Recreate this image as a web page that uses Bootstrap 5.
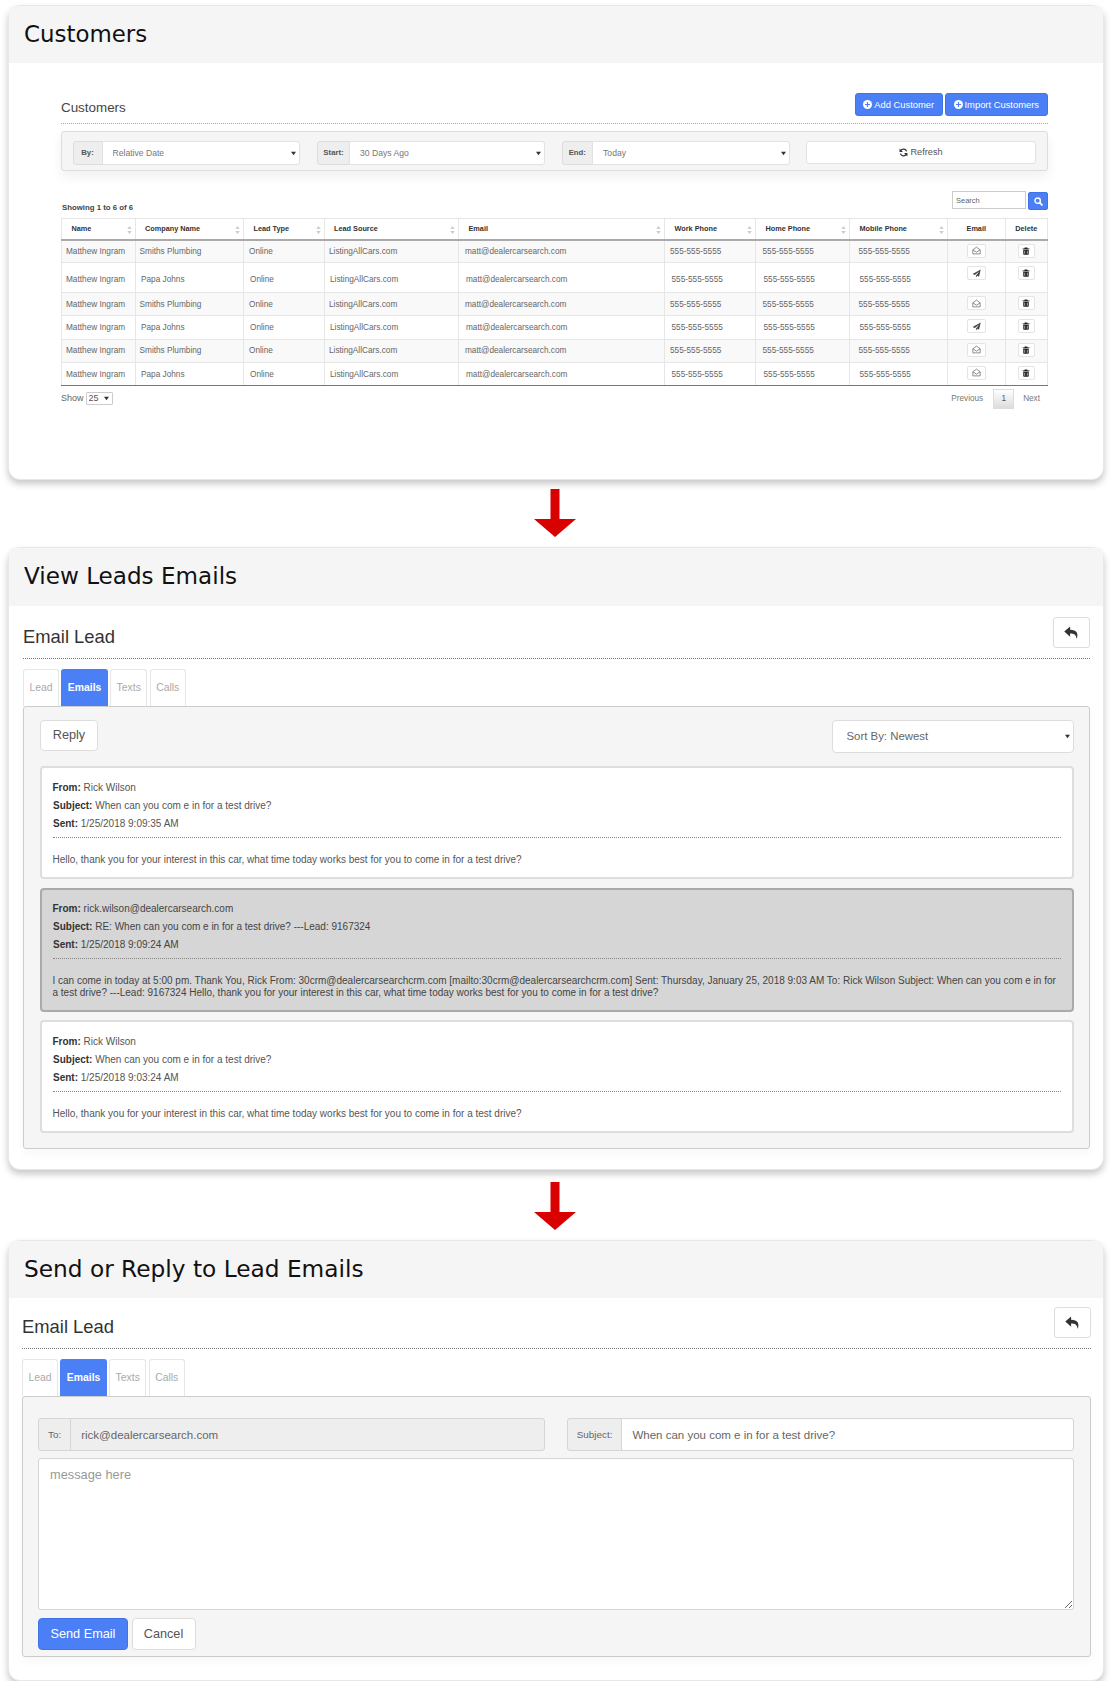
<!DOCTYPE html>
<html lang="en">
<head>
<meta charset="utf-8">
<title>Customers</title>
<link href="https://cdn.jsdelivr.net/npm/bootstrap@5.3.0/dist/css/bootstrap.min.css" rel="stylesheet">
<style>
body{background:#fff;margin:0;font-family:"Liberation Sans",Arial,sans-serif;color:#555;padding-top:5px}
.pnl{margin:0 6px 0 8px;border:1px solid #e8e8e8;border-radius:12px;background:#fff;box-shadow:0 4px 7px rgba(0,0,0,.22);overflow:visible}
.pnl-head{height:58px;background:#f5f5f5;border:0;border-radius:11px 11px 0 0;padding:0 15px 1px;display:flex;align-items:center}
.pnl-head.first{height:57px}
.pnl-head.last{height:57px}
.pnl-head h1{margin:0;font:400 23.1px "DejaVu Sans",Verdana,sans-serif;color:#111}
.pnl-head.first h1{font-size:22.9px}
.pnl-head.last h1{font-size:23.25px}
.arrow-gap{display:flex;justify-content:center;align-items:center;height:67px}
.arrow-gap.second{height:69.5px;padding-top:2px}
.arrow-gap svg{display:block}
.cust-body{padding:30px 55px 70px 52px}
.title-row{display:flex;justify-content:space-between;align-items:flex-end;border-bottom:1px dotted #aaa;padding-bottom:7px}
.title-row h2{margin:0;font-size:13.4px;line-height:16px;font-weight:400;color:#444}
.btn-blue{background:#4b7ff5;border:1px solid #4173e8;color:#fff;border-radius:3px}
.btn-blue:hover{background:#4b7ff5;color:#fff}
.top-btn{font-size:9.4px;height:23px;width:88.5px;padding:0;display:inline-flex;align-items:center;justify-content:center;gap:2px;line-height:1}
.top-btn.wide{width:103.5px}
.top-btns{display:flex;gap:1.5px}
.filter-well{margin-top:7px;height:40px;background:#f5f5f5;border:1px solid #ddd;border-radius:3px;padding:9px 11px 9px 10.5px;display:flex;gap:16.6px;box-shadow:0 6px 12px rgba(0,0,0,.06)}
.filter-well>*{flex:1 1 0;min-width:0}
.flt{height:24px;flex-wrap:nowrap}
.flt .input-group-text{font-size:7.8px;font-weight:700;color:#555;background:#eee;border:1px solid #ddd;padding:0;width:30px;border-radius:3px 0 0 3px;justify-content:center}
.flt .input-group-text.w-start{width:33px}
.flt .input-group-text.w-end{width:31.5px}
.flt .form-select{font-size:8.6px;color:#777;height:24px;min-height:0;padding:0 14px 0 10px;border:1px solid #e2e2e2;border-radius:0 3px 3px 0}
.form-select{background-image:url("data:image/svg+xml,%3Csvg xmlns='http://www.w3.org/2000/svg' viewBox='0 0 6 6'%3E%3Cpath d='M0 1h6L3 5z' fill='%23333'/%3E%3C/svg%3E");background-size:5px 5px;background-position:right 3px center}
.refresh-btn{height:23px;font-size:9.2px;color:#555;background:#fff;border:1px solid #e2e2e2;border-radius:3px;padding:0;display:flex;align-items:center;justify-content:center;gap:2px}
.tools-row{margin-top:20px;display:flex;justify-content:space-between;align-items:flex-end}
.showing{font-size:7.8px;font-weight:700;color:#444;line-height:10px;padding:0 0 0 1px;margin-bottom:-3px}
.search-box{display:flex;gap:2px;align-items:flex-start}
.search-box .form-control{width:74px;height:18px;min-height:0;font-size:7.5px;padding:0 3px;border:1px solid #ccc;border-radius:0}
.search-btn{width:20px;height:18px;margin-top:1px;padding:0;display:flex;align-items:center;justify-content:center;border-radius:2px}
.crm-table{table-layout:fixed;width:100%;margin:8px 0 0;border-collapse:collapse;font-size:8.25px;color:#666}
.crm-table th,.crm-table td{border:1px solid #e6e6e6;padding:0;vertical-align:middle;line-height:10px;box-shadow:none;background:transparent;color:inherit}
.crm-table thead th{height:21px;font-size:7.3px;font-weight:700;color:#333;padding:0 3px 0 9.5px;border-bottom:2px solid #aaa}
.crm-table thead th.mid{text-align:center;padding:0}
.crm-table tbody tr:nth-child(odd) td{background:#f9f9f9}
.crm-table tbody td{height:23.2px;padding:1.5px 0 0 4px}
.crm-table tbody tr.tall td{height:30px;padding-top:4px}
.crm-table tbody tr:last-child td{border-bottom:1px solid #777}
.crm-table tbody td:nth-child(3){padding-left:5px}
.crm-table tbody td:nth-child(4){padding-left:4.5px}
.crm-table tbody td:nth-child(5){padding-left:6px}
.crm-table tbody td:nth-child(6){padding-left:5px}
.crm-table tbody td:nth-child(7){padding-left:6.5px}
.crm-table tbody td:nth-child(8){padding-left:8.500px}
.crm-table tbody tr:nth-child(even) td:nth-child(2){padding-left:5.5px}
.crm-table tbody tr:nth-child(even) td:nth-child(3){padding-left:6px}
.crm-table tbody tr:nth-child(even) td:nth-child(4){padding-left:5.5px}
.crm-table tbody tr:nth-child(even) td:nth-child(5){padding-left:7px}
.crm-table tbody tr:nth-child(even) td:nth-child(6){padding-left:6.5px}
.crm-table tbody tr:nth-child(even) td:nth-child(7){padding-left:7.5px}
.crm-table tbody tr:nth-child(even) td:nth-child(8){padding-left:9.5px}
.crm-table tbody td.act,.crm-table tbody tr:nth-child(even) td.act{padding:3px 0 0;text-align:center;vertical-align:top}
.srt{float:right;margin-top:2px}
.ico-btn{display:inline-flex;align-items:center;justify-content:center;height:14px;width:19px;padding:0;background:#fff;border:1px solid #e4e4e4;border-radius:2px}
.ico-btn.narrow{width:17px}
.foot-row{display:flex;justify-content:space-between;align-items:flex-start;margin-top:2px;font-size:8.6px;color:#666}
.show-len{display:flex;align-items:center;gap:2px;padding-top:4px;font-size:9px}
.show-len .form-select{width:27px;height:13px;min-height:0;padding:0 0 0 2px;font-size:9px;line-height:11px;border:1px solid #ccc;border-radius:1px;color:#555}
.pager{margin:1px 8px 0 0;display:flex;align-items:center;list-style:none;padding:0}
.pager a{color:#777;text-decoration:none;font-size:8.2px}
.pager .pg-cur{display:flex;align-items:center;justify-content:center;width:21px;height:20px;margin:0 9px 0 10px;border:1px solid #ddd;background:linear-gradient(#fff,#dcdcdc);color:#555}
.lead-body{padding:11px 13px 20px 14px}
.lead-body.third{padding:9px 12px 23.5px 13px}
.lead-top{display:flex;justify-content:space-between;align-items:flex-end;border-bottom:1px dotted #777;padding-bottom:10px}
.lead-top h2{margin:0;font-size:18.4px;line-height:22px;font-weight:400;color:#333}
.back-btn{width:37px;height:31.5px;background:#fff;border:1px solid #ddd;border-radius:3px;padding:0;display:flex;align-items:center;justify-content:center}
.lead-tabs{margin-top:9.5px;gap:2.5px;border:0;height:37.5px;flex-wrap:nowrap}
.lead-tabs .nav-link{height:37.5px;margin:0;padding:0 5.4px;display:flex;align-items:center;font-size:10.4px;color:#aaa;background:#fff;border:1px solid #e6e6e6;border-bottom:0;border-radius:3px 3px 0 0}
.lead-tabs .nav-link.active{background:#4b7ff5;border-color:#4b7ff5;color:#fff;font-weight:700}
.lead-pane{background:#f5f5f5;border:1px solid #ccc;border-radius:3px;box-shadow:0 5px 10px rgba(0,0,0,.03)}
.list-pane{padding:13px 15.5px 15px 16px}
.pane-top{display:flex;justify-content:space-between;align-items:flex-start;margin-bottom:13.5px}
.reply-btn{height:31px;width:58px;font-size:12.7px;color:#555;background:#fff;border:1px solid #ddd;border-radius:4px;padding:0}
.sort-sel{width:242px;height:32.5px;min-height:0;font-size:11.4px;color:#666;padding:0 14px;border:1px solid #ddd;border-radius:4px}
.mail-item{background:#fff;border:2px solid #ddd;border-radius:4px;padding:10.5px 10.5px 11.5px;margin-bottom:8.5px;font-size:10px;color:#555}
.mail-item:last-child{margin-bottom:0}
.mail-item.dark{background:#d6d6d6;border-color:#aaa;color:#444}
.mail-item b{color:#333}
.mail-line{height:18px;line-height:18px}
.mail-sep{margin-top:4px;border-top:1px dotted #888}
.mail-msg{margin-top:16px;line-height:11.5px;min-height:12px}
.mail-line.i1{padding-left:.5px}
.form-pane{padding:21px 16.5px 5.5px 15px}
.addr-row{display:flex;gap:22px}
.addr-row>*{flex:1 1 0;min-width:0}
.addr-row .input-group{height:33px;flex-wrap:nowrap}
.addr-row .input-group-text{font-size:9.9px;color:#666;background:#eee;border:1px solid #d5d5d5;padding:0 9px;border-radius:3px 0 0 3px}
.addr-row .form-control{height:33px;font-size:11.5px;color:#666;padding:0 10px;border:1px solid #d5d5d5;border-radius:0 3px 3px 0}
.addr-row .form-control[readonly]{background:#eee}
.msg-area{display:block;margin-top:7px;height:152px;font-size:12.8px;color:#666;padding:6px 11px;border:1px solid #d5d5d5;border-radius:3px}
.msg-area::placeholder{color:#999}
.send-row{display:flex;gap:3.5px;margin-top:8px}
.send-btn{height:32px;width:90px;font-size:12.7px;padding:0;border-radius:4px}
.cancel-btn{height:32px;width:64px;font-size:12.7px;padding:0;color:#555;background:#fff;border:1px solid #ddd;border-radius:4px}
</style>
</head>
<body>
<svg width="0" height="0" class="d-block" aria-hidden="true">
  <defs>
    <symbol id="i-plus" viewBox="0 0 16 16"><circle cx="8" cy="8" r="8" fill="#fff"/><path d="M7 3.5h2V7h3.5v2H9v3.5H7V9H3.5V7H7z" fill="#4b7ff5"/></symbol>
    <symbol id="i-sort" viewBox="0 0 5 9"><path d="M2.5 0 5 3.4H0zM2.5 9 0 5.6h5z" fill="#ccc"/></symbol>
    <symbol id="i-open" viewBox="0 0 16 16"><path d="M1.5 6.8 8 2l6.500 4.800V14h-13zM1.500 6.800 8 11l6.500-4.200" fill="none" stroke="#666" stroke-width="1.300"/></symbol>
    <symbol id="i-send" viewBox="0 0 16 16"><path d="M15.500 1 1 9l4 1.800L13 4 7 11.800V15l2.500-2.800 3 1.500z" fill="#444"/></symbol>
    <symbol id="i-trash" viewBox="0 0 16 16"><path d="M5.500 1h5l1 1.800H15v1.700H1V2.800h3.500zM2.500 5.500h11V14a1.500 1.500 0 0 1-1.500 1.500H4A1.500 1.500 0 0 1 2.500 14zM5 7.500v6h1.200v-6zM9.800 7.500v6H11v-6z" fill="#222" fill-rule="evenodd"/></symbol>
    <symbol id="i-back" viewBox="0 0 16 16"><path d="M6.500 1.500 .3 7l6.200 5.500V9c4 0 6.500.700 7 6C15.800 9 13.500 5 6.500 5z" fill="#333"/></symbol>
  </defs>
</svg>

<section class="card pnl">
  <div class="card-header pnl-head first"><h1>Customers</h1></div>
  <div class="cust-body">
    <div class="title-row">
      <h2>Customers</h2>
      <div class="top-btns">
        <button class="btn btn-blue top-btn" type="button"><svg width="9" height="9"><use href="#i-plus"/></svg>Add Customer</button>
        <button class="btn btn-blue top-btn wide" type="button"><svg width="9" height="9"><use href="#i-plus"/></svg>Import Customers</button>
      </div>
    </div>
    <div class="filter-well">
      <div class="input-group flt"><span class="input-group-text">By:</span><select class="form-select"><option>Relative Date</option></select></div>
      <div class="input-group flt"><span class="input-group-text w-start">Start:</span><select class="form-select"><option>30 Days Ago</option></select></div>
      <div class="input-group flt"><span class="input-group-text w-end">End:</span><select class="form-select"><option>Today</option></select></div>
      <button class="btn refresh-btn" type="button"><svg width="9" height="9" viewBox="0 0 16 16"><path d="M13.500 6A6 6 0 0 0 3 4.500M2.500 10A6 6 0 0 0 13 11.500" fill="none" stroke="#333" stroke-width="2.400"/><path d="M1 1v6h6zM15 15V9H9z" fill="#333"/></svg>Refresh</button>
    </div>
    <div class="tools-row">
      <div class="showing">Showing 1 to 6 of 6</div>
      <div class="search-box">
        <input class="form-control" type="text" placeholder="Search">
        <button class="btn btn-blue search-btn" type="button"><svg width="9" height="9" viewBox="0 0 16 16"><circle cx="6.500" cy="6.500" r="4.800" fill="none" stroke="#fff" stroke-width="2.600"/><path d="m10 10 5 5" stroke="#fff" stroke-width="3"/></svg></button>
      </div>
    </div>
    <table class="table crm-table">
      <colgroup><col style="width:73.500px"><col style="width:108.500px"><col style="width:80.500px"><col style="width:134.500px"><col style="width:206px"><col style="width:91px"><col style="width:94px"><col style="width:98px"><col style="width:57.500px"><col></colgroup>
      <thead>
        <tr>
          <th>Name<svg class="srt" width="5" height="8"><use href="#i-sort"/></svg></th>
          <th>Company Name<svg class="srt" width="5" height="8"><use href="#i-sort"/></svg></th>
          <th>Lead Type<svg class="srt" width="5" height="8"><use href="#i-sort"/></svg></th>
          <th>Lead Source<svg class="srt" width="5" height="8"><use href="#i-sort"/></svg></th>
          <th>Email<svg class="srt" width="5" height="8"><use href="#i-sort"/></svg></th>
          <th>Work Phone<svg class="srt" width="5" height="8"><use href="#i-sort"/></svg></th>
          <th>Home Phone<svg class="srt" width="5" height="8"><use href="#i-sort"/></svg></th>
          <th>Mobile Phone<svg class="srt" width="5" height="8"><use href="#i-sort"/></svg></th>
          <th class="mid">Email</th>
          <th class="mid">Delete</th>
        </tr>
      </thead>
      <tbody>
        <tr><td>Matthew Ingram</td><td>Smiths Plumbing</td><td>Online</td><td>ListingAllCars.com</td><td>matt@dealercarsearch.com</td><td>555-555-5555</td><td>555-555-5555</td><td>555-555-5555</td><td class="act"><span class="ico-btn"><svg width="9" height="9"><use href="#i-open"/></svg></span></td><td class="act"><span class="ico-btn narrow"><svg width="8" height="8"><use href="#i-trash"/></svg></span></td></tr>
        <tr class="tall"><td>Matthew Ingram</td><td>Papa Johns</td><td>Online</td><td>ListingAllCars.com</td><td>matt@dealercarsearch.com</td><td>555-555-5555</td><td>555-555-5555</td><td>555-555-5555</td><td class="act"><span class="ico-btn"><svg width="9" height="9"><use href="#i-send"/></svg></span></td><td class="act"><span class="ico-btn narrow"><svg width="8" height="8"><use href="#i-trash"/></svg></span></td></tr>
        <tr><td>Matthew Ingram</td><td>Smiths Plumbing</td><td>Online</td><td>ListingAllCars.com</td><td>matt@dealercarsearch.com</td><td>555-555-5555</td><td>555-555-5555</td><td>555-555-5555</td><td class="act"><span class="ico-btn"><svg width="9" height="9"><use href="#i-open"/></svg></span></td><td class="act"><span class="ico-btn narrow"><svg width="8" height="8"><use href="#i-trash"/></svg></span></td></tr>
        <tr><td>Matthew Ingram</td><td>Papa Johns</td><td>Online</td><td>ListingAllCars.com</td><td>matt@dealercarsearch.com</td><td>555-555-5555</td><td>555-555-5555</td><td>555-555-5555</td><td class="act"><span class="ico-btn"><svg width="9" height="9"><use href="#i-send"/></svg></span></td><td class="act"><span class="ico-btn narrow"><svg width="8" height="8"><use href="#i-trash"/></svg></span></td></tr>
        <tr><td>Matthew Ingram</td><td>Smiths Plumbing</td><td>Online</td><td>ListingAllCars.com</td><td>matt@dealercarsearch.com</td><td>555-555-5555</td><td>555-555-5555</td><td>555-555-5555</td><td class="act"><span class="ico-btn"><svg width="9" height="9"><use href="#i-open"/></svg></span></td><td class="act"><span class="ico-btn narrow"><svg width="8" height="8"><use href="#i-trash"/></svg></span></td></tr>
        <tr><td>Matthew Ingram</td><td>Papa Johns</td><td>Online</td><td>ListingAllCars.com</td><td>matt@dealercarsearch.com</td><td>555-555-5555</td><td>555-555-5555</td><td>555-555-5555</td><td class="act"><span class="ico-btn"><svg width="9" height="9"><use href="#i-open"/></svg></span></td><td class="act"><span class="ico-btn narrow"><svg width="8" height="8"><use href="#i-trash"/></svg></span></td></tr>
      </tbody>
    </table>
    <div class="foot-row">
      <div class="show-len">Show <select class="form-select"><option>25</option></select></div>
      <ul class="pager">
        <li><a href="#">Previous</a></li>
        <li><a class="pg-cur" href="#">1</a></li>
        <li><a href="#">Next</a></li>
      </ul>
    </div>
  </div>
</section>

<div class="arrow-gap"><svg width="42" height="48" viewBox="0 0 42 48"><path d="M16.500 0h9v30H42L21 48 0 30h16.500z" fill="#d90000"/></svg></div>

<section class="card pnl">
  <div class="card-header pnl-head"><h1>View Leads Emails</h1></div>
  <div class="lead-body">
    <div class="lead-top">
      <h2>Email Lead</h2>
      <button class="btn back-btn" type="button" aria-label="Back"><svg width="15" height="15"><use href="#i-back"/></svg></button>
    </div>
    <ul class="nav nav-tabs lead-tabs">
      <li class="nav-item"><a class="nav-link" href="#">Lead</a></li>
      <li class="nav-item"><a class="nav-link active" href="#">Emails</a></li>
      <li class="nav-item"><a class="nav-link" href="#">Texts</a></li>
      <li class="nav-item"><a class="nav-link" href="#">Calls</a></li>
    </ul>
    <div class="lead-pane list-pane">
      <div class="pane-top">
        <button class="btn reply-btn" type="button">Reply</button>
        <select class="form-select sort-sel"><option>Sort By: Newest</option></select>
      </div>
      <div class="mail-item">
        <div class="mail-line"><b>From:</b> Rick Wilson</div>
        <div class="mail-line i1"><b>Subject:</b> When can you com e in for a test drive?</div>
        <div class="mail-line i1"><b>Sent:</b> 1/25/2018 9:09:35 AM</div>
        <div class="mail-sep"></div>
        <div class="mail-msg">Hello, thank you for your interest in this car, what time today works best for you to come in for a test drive?</div>
      </div>
      <div class="mail-item dark">
        <div class="mail-line"><b>From:</b> rick.wilson@dealercarsearch.com</div>
        <div class="mail-line i1"><b>Subject:</b> RE: When can you com e in for a test drive? ---Lead: 9167324</div>
        <div class="mail-line i1"><b>Sent:</b> 1/25/2018 9:09:24 AM</div>
        <div class="mail-sep"></div>
        <div class="mail-msg">I can come in today at 5:00 pm. Thank You, Rick From: 30crm@dealercarsearchcrm.com [mailto:30crm@dealercarsearchcrm.com] Sent: Thursday, January 25, 2018 9:03 AM To: Rick Wilson Subject: When can you com e in for a test drive? ---Lead: 9167324 Hello, thank you for your interest in this car, what time today works best for you to come in for a test drive?</div>
      </div>
      <div class="mail-item">
        <div class="mail-line"><b>From:</b> Rick Wilson</div>
        <div class="mail-line i1"><b>Subject:</b> When can you com e in for a test drive?</div>
        <div class="mail-line i1"><b>Sent:</b> 1/25/2018 9:03:24 AM</div>
        <div class="mail-sep"></div>
        <div class="mail-msg">Hello, thank you for your interest in this car, what time today works best for you to come in for a test drive?</div>
      </div>
    </div>
  </div>
</section>

<div class="arrow-gap second"><svg width="42" height="48" viewBox="0 0 42 48"><path d="M16.500 0h9v30H42L21 48 0 30h16.500z" fill="#d90000"/></svg></div>

<section class="card pnl">
  <div class="card-header pnl-head last"><h1>Send or Reply to Lead Emails</h1></div>
  <div class="lead-body third">
    <div class="lead-top">
      <h2>Email Lead</h2>
      <button class="btn back-btn" type="button" aria-label="Back"><svg width="15" height="15"><use href="#i-back"/></svg></button>
    </div>
    <ul class="nav nav-tabs lead-tabs">
      <li class="nav-item"><a class="nav-link" href="#">Lead</a></li>
      <li class="nav-item"><a class="nav-link active" href="#">Emails</a></li>
      <li class="nav-item"><a class="nav-link" href="#">Texts</a></li>
      <li class="nav-item"><a class="nav-link" href="#">Calls</a></li>
    </ul>
    <div class="lead-pane form-pane">
      <div class="addr-row">
        <div class="input-group"><span class="input-group-text">To:</span><input class="form-control" type="text" value="rick@dealercarsearch.com" readonly></div>
        <div class="input-group"><span class="input-group-text">Subject:</span><input class="form-control" type="text" value="When can you com e in for a test drive?"></div>
      </div>
      <textarea class="form-control msg-area" placeholder="message here"></textarea>
      <div class="send-row">
        <button class="btn btn-blue send-btn" type="button">Send Email</button>
        <button class="btn cancel-btn" type="button">Cancel</button>
      </div>
    </div>
  </div>
</section>
<script src="https://cdn.jsdelivr.net/npm/bootstrap@5.3.0/dist/js/bootstrap.bundle.min.js"></script>
</body>
</html>
